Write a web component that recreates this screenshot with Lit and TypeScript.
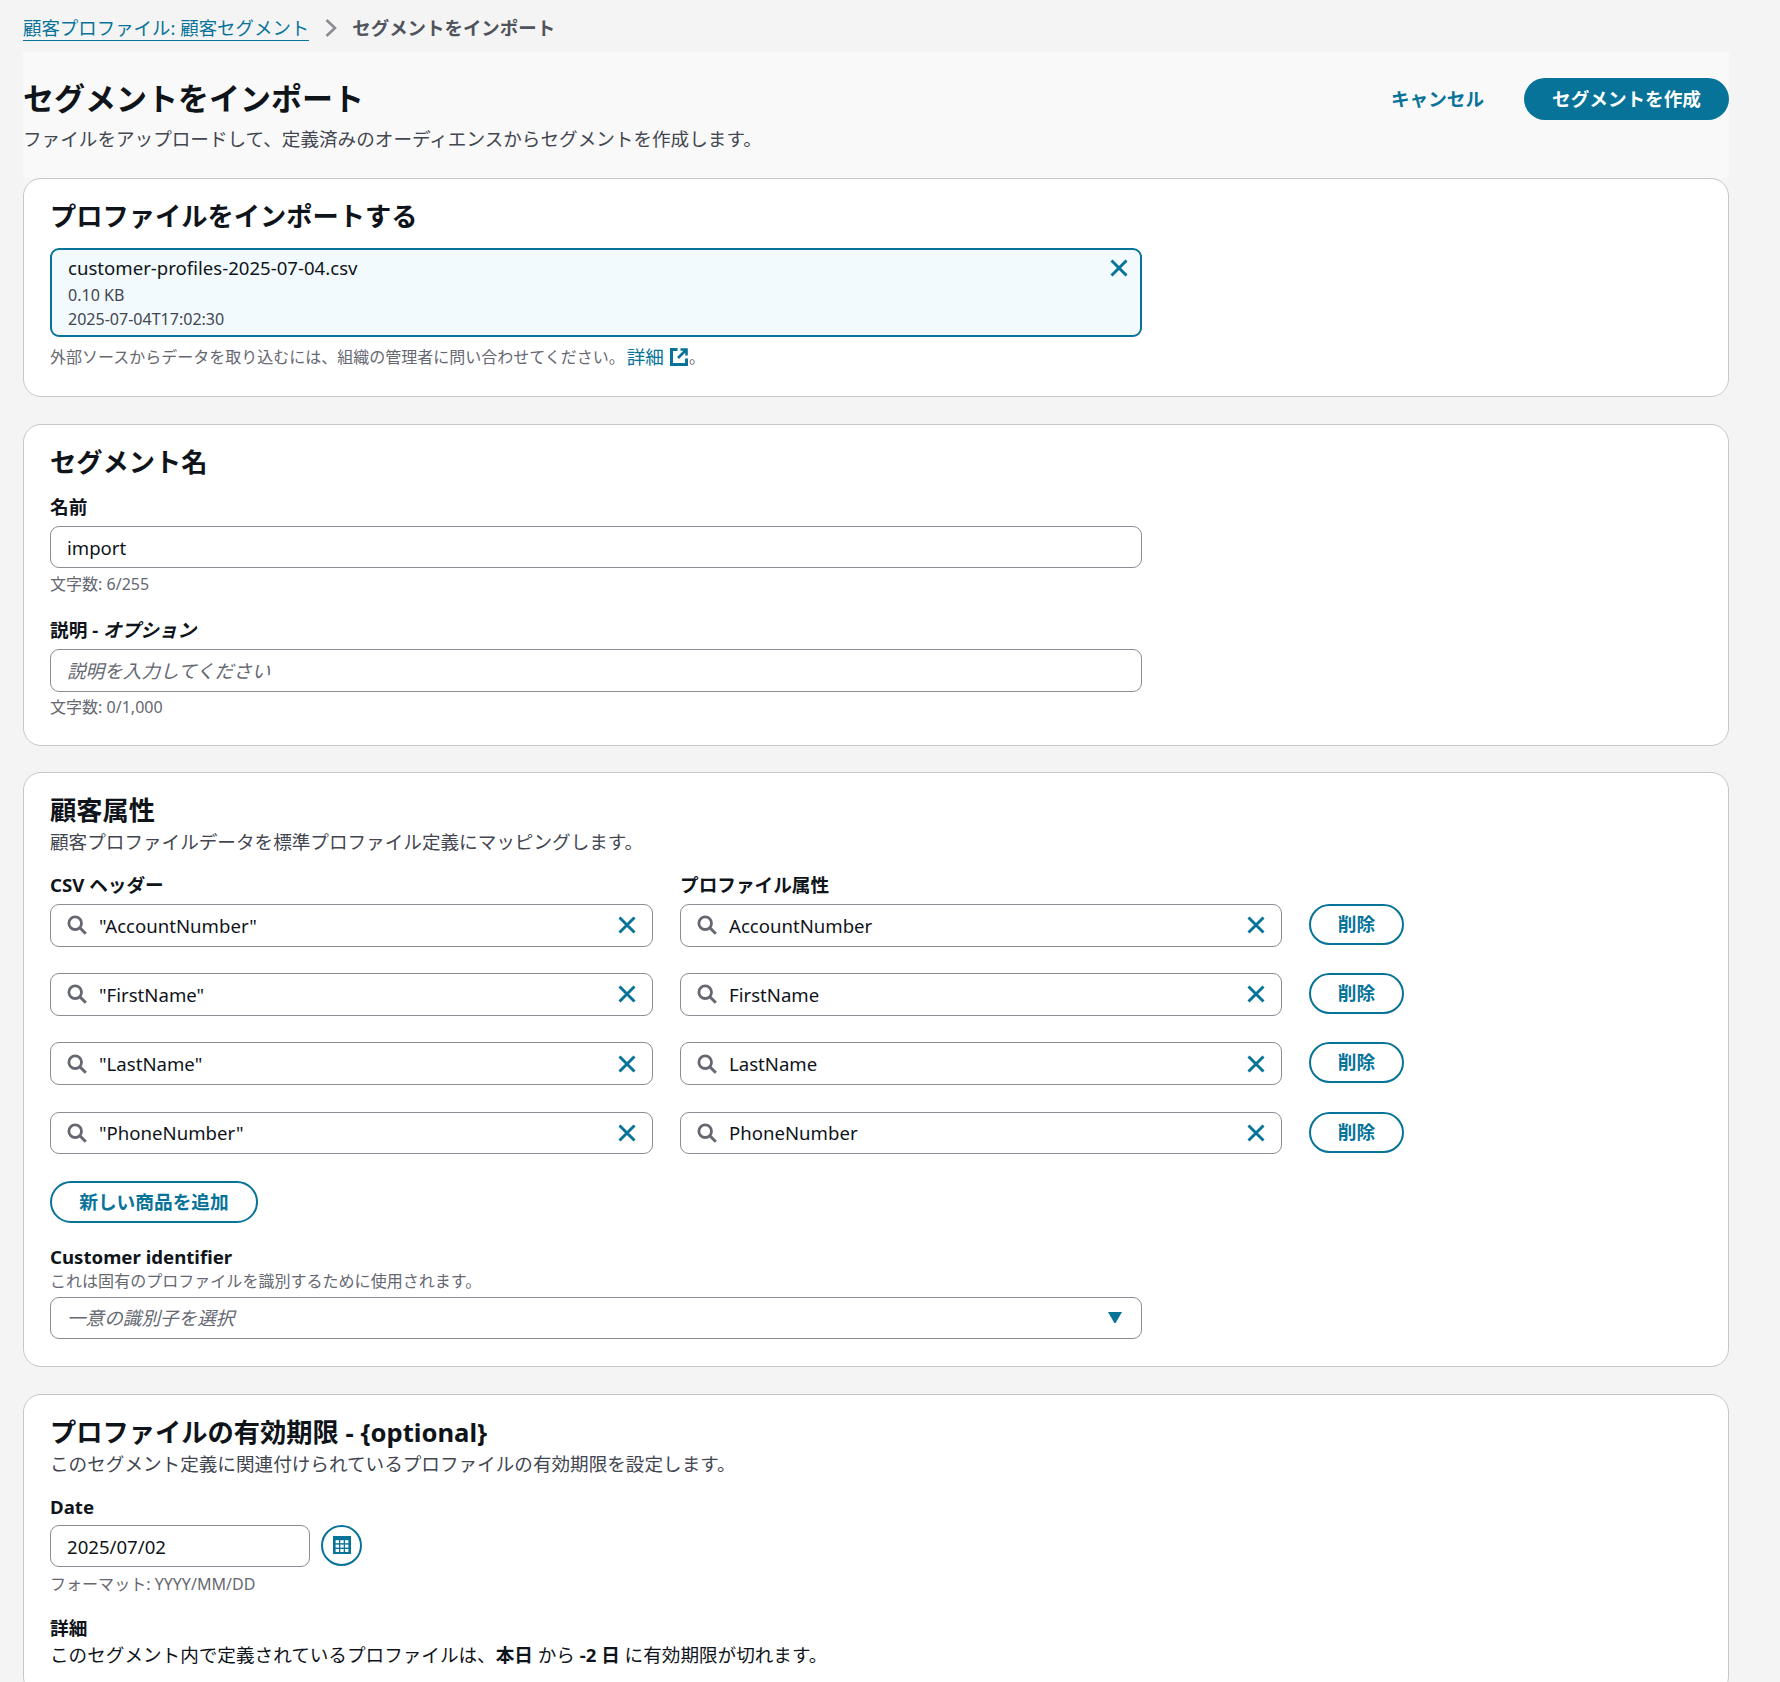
import { LitElement, html, css, svg } from "lit";
import { customElement } from "lit/decorators.js";

const xIcon = html`<svg class="x" viewBox="0 0 18 18" width="18" height="18" aria-hidden="true"><path d="M1.5 1.5l15 15M16.5 1.5l-15 15" fill="none" stroke="currentColor" stroke-width="2.9"/></svg>`;
const searchIcon = html`<svg class="search" viewBox="0 0 20 20" width="20" height="20" aria-hidden="true"><circle cx="8.2" cy="8.2" r="6.3" fill="none" stroke="currentColor" stroke-width="2.8"/><path d="M12.8 12.8l6 6" fill="none" stroke="currentColor" stroke-width="3"/></svg>`;
const extIcon = html`<svg class="ext" viewBox="0 0 18 18" width="18" height="18" aria-hidden="true"><path d="M7.5 1.6H1.5v14.9H16.5V10.5" fill="none" stroke="currentColor" stroke-width="3"/><path d="M10.5 1.5h6v6M16 2L8 10" fill="none" stroke="currentColor" stroke-width="2.6"/></svg>`;
const calIcon = html`<svg viewBox="0 0 18 18" width="18" height="18" aria-hidden="true"><rect width="18" height="18" fill="currentColor"/>${[2.6, 7.3, 12].flatMap((x) => [4.2, 8.6, 13].map((y) => svg`<rect x="${x}" y="${y}" width="3.4" height="3" fill="#fff"/>`))}</svg>`;

const rows = [
  ['"AccountNumber"', "AccountNumber"],
  ['"FirstName"', "FirstName"],
  ['"LastName"', "LastName"],
  ['"PhoneNumber"', "PhoneNumber"],
];

@customElement("app-root")
export class AppRoot extends LitElement {
  static styles = css`
    :host {
      display: block;
      width: 1780px;
      height: 1682px;
      overflow: hidden;
      background: #f4f4f4;
      color: #0f141a;
      font-family: "Noto Sans", "Noto Sans CJK JP", sans-serif;
      font-size: 18.6px;
    }
    .page { padding: 0 51px 0 23px; }
    .crumbs { height: 52px; display: flex; align-items: flex-start; padding-top: 16px; box-sizing: border-box; line-height: 24px; font-size: 18.45px; }
    .crumb-link { color: #077398; border-bottom: 1.5px solid #077398; height: 24px; padding-bottom: 0; }
    .chev { margin: 3px 15px 0 16px; color: #8c8c94; }
    .crumb-cur { color: #4f535c; font-weight: 700; }
    .head { height: 126px; box-sizing: border-box; background: #f9f9f9; padding-top: 26px; display: flex; justify-content: space-between; align-items: flex-start; }
    h1 { margin: -1px 0 1px; font-size: 31px; line-height: 42px; font-weight: 700; }
    .head-sub { margin-top: 7px; line-height: 26px; color: #424650; }
    .actions { display: flex; align-items: center; gap: 40px; }
    .link-btn { color: #077398; font-weight: 700; padding-bottom: 4px; }
    .primary { height: 42px; box-sizing: border-box; padding-bottom: 4px; width: 205px; border-radius: 21px; background: #077398; color: #fff; font-weight: 700; display: flex; align-items: center; justify-content: center; }
    .cards { display: flex; flex-direction: column; gap: 26.5px; }
    .card { background: #fff; border: 1px solid #c6c6cd; border-radius: 18px; padding: 20px 26px 27px; }
    h2 { margin: 0; font-size: 26.25px; line-height: 34px; font-weight: 700; }
    .lat { font-size: 25.6px; }
    .sub { line-height: 26px; color: #424650; margin-top: 2px; }
    .sub.tight { margin-top: 1px; }
    .label { line-height: 24px; font-weight: 700; font-size: 18.65px; }
    .hint { font-size: 16.05px; line-height: 22px; color: #656871; }
    .box { width: 1092px; box-sizing: border-box; height: 42.5px; border: 1px solid #8c8c94; border-radius: 9px; display: flex; align-items: center; padding: 2px 16px 0; background: #fff; }
    .box.grid { width: auto; }
    .ph { color: #656871; font-style: italic; margin-top: -3px; }
    .select .ph { margin-top: -5px; }
    .file { margin-top: 15px; width: 1092px; height: 89px; box-sizing: border-box; border: 2px solid #077398; border-radius: 9px; background: #f2fafd; padding: 6px 12px 0 16px; display: flex; justify-content: space-between; align-items: flex-start; }
    .file .name { line-height: 24px; }
    .file .meta { font-size: 16.05px; line-height: 24px; color: #424650; }
    .file .m1 { margin-top: 3px; }
    .file .m2 { margin-top: 0; }
    .file .x { margin-top: 3px; }
    .x { color: #077398; flex: none; margin-top: -2px; }
    .search { color: #656871; flex: none; margin: -2px 12px 0 0; }
    .card1-hint { margin-top: 8px; font-size: 16px; line-height: 24px; color: #656871; display: flex; align-items: center; }
    .card1-hint a { color: #077398; font-size: 18.6px; margin-left: 2px; }
    .ext { color: #077398; margin: 0 1px 0 6px; }
    .mt16 { margin-top: 16px; }
    .mt7 { margin-top: 7px; }
    .mt23 { margin-top: 23px; }
    .mt22 { margin-top: 22px; }
    .mt21 { margin-top: 21px; }
    .mt6 { margin-top: 6px; }
    .mt4 { margin-top: 4px; }
    .mt5 { margin-top: 5px; }
    .cols { display: grid; grid-template-columns: 603px 602px 95px; column-gap: 27px; row-gap: 26.7px; align-items: start; }
    .cols-head { margin-top: 18px; margin-bottom: 7px; }
    .cell-text { flex: 1; margin-top: -2px; }
    .outline { box-sizing: border-box; height: 41px; padding-bottom: 4px; border: 2px solid #077398; border-radius: 21px; color: #077398; font-weight: 700; font-size: 18.7px; display: flex; align-items: center; justify-content: center; }
    .add { width: 208px; margin-top: 26.6px; height: 42px; padding-bottom: 3px; }
    .caret { flex: none; color: #077398; margin: -2px 3px 0 0; }
    .select { justify-content: space-between; margin-top: 5px; }
    .desc { margin-top: 1px; }
    .date-row { display: flex; align-items: flex-start; gap: 11px; margin-top: 6px; }
    .date { width: 260px; }
    .cal { width: 41px; height: 41px; box-sizing: border-box; border: 2px solid #077398; border-radius: 50%; color: #077398; display: flex; align-items: center; justify-content: center; }
    .mt18 { margin-top: 18px; }
    .detail { margin-top: 3px; line-height: 24px; }
    b { font-weight: 700; }
    .label i { font-weight: 700; }
  `;

  render() {
    return html`
      <div class="page">
        <nav class="crumbs">
          <span class="crumb-link">顧客プロファイル: 顧客セグメント</span>
          <svg class="chev" viewBox="0 0 12 18" width="12" height="18" aria-hidden="true"><path d="M1.5 1l8.5 8-8.5 8" fill="none" stroke="currentColor" stroke-width="2.6"/></svg>
          <span class="crumb-cur">セグメントをインポート</span>
        </nav>
        <header class="head">
          <div>
            <h1>セグメントをインポート</h1>
            <div class="head-sub">ファイルをアップロードして、定義済みのオーディエンスからセグメントを作成します。</div>
          </div>
          <div class="actions">
            <span class="link-btn">キャンセル</span>
            <span class="primary">セグメントを作成</span>
          </div>
        </header>
        <div class="cards">
          <section class="card">
            <h2>プロファイルをインポートする</h2>
            <div class="file">
              <div>
                <div class="name">customer-profiles-2025-07-04.csv</div>
                <div class="meta m1">0.10 KB</div>
                <div class="meta m2">2025-07-04T17:02:30</div>
              </div>
              ${xIcon}
            </div>
            <div class="card1-hint">外部ソースからデータを取り込むには、組織の管理者に問い合わせてください。<a>詳細</a>${extIcon}。</div>
          </section>
          <section class="card">
            <h2>セグメント名</h2>
            <div class="label mt16">名前</div>
            <div class="box mt7">import</div>
            <div class="hint mt5">文字数: 6/255</div>
            <div class="label mt23">説明 - <i>オプション</i></div>
            <div class="box mt7"><span class="ph">説明を入力してください</span></div>
            <div class="hint mt4">文字数: 0/1,000</div>
          </section>
          <section class="card">
            <h2>顧客属性</h2>
            <div class="sub">顧客プロファイルデータを標準プロファイル定義にマッピングします。</div>
            <div class="cols cols-head">
              <div class="label">CSV ヘッダー</div>
              <div class="label">プロファイル属性</div>
            </div>
            <div class="cols">
              ${rows.map(
                ([a, b]) => html`
                  <div class="box grid">${searchIcon}<span class="cell-text">${a}</span>${xIcon}</div>
                  <div class="box grid">${searchIcon}<span class="cell-text">${b}</span>${xIcon}</div>
                  <div class="outline">削除</div>
                `
              )}
            </div>
            <div class="outline add">新しい商品を追加</div>
            <div class="label mt22">Customer identifier</div>
            <div class="hint desc">これは固有のプロファイルを識別するために使用されます。</div>
            <div class="box select"><span class="ph">一意の識別子を選択</span><svg class="caret" viewBox="0 0 14 11" width="14" height="11" aria-hidden="true"><path d="M0 0h14L7.6 11h-1.2z" fill="currentColor"/></svg></div>
          </section>
          <section class="card">
            <h2>プロファイルの有効期限 <span class="lat">- {optional}</span></h2>
            <div class="sub tight">このセグメント定義に関連付けられているプロファイルの有効期限を設定します。</div>
            <div class="label mt18">Date</div>
            <div class="date-row">
              <div class="box date">2025/07/02</div>
              <div class="cal">${calIcon}</div>
            </div>
            <div class="hint mt6">フォーマット: YYYY/MM/DD</div>
            <div class="label mt21">詳細</div>
            <div class="detail">このセグメント内で定義されているプロファイルは、<b>本日</b> から <b>-2 日</b> に有効期限が切れます。</div>
          </section>
        </div>
      </div>
    `;
  }
}
